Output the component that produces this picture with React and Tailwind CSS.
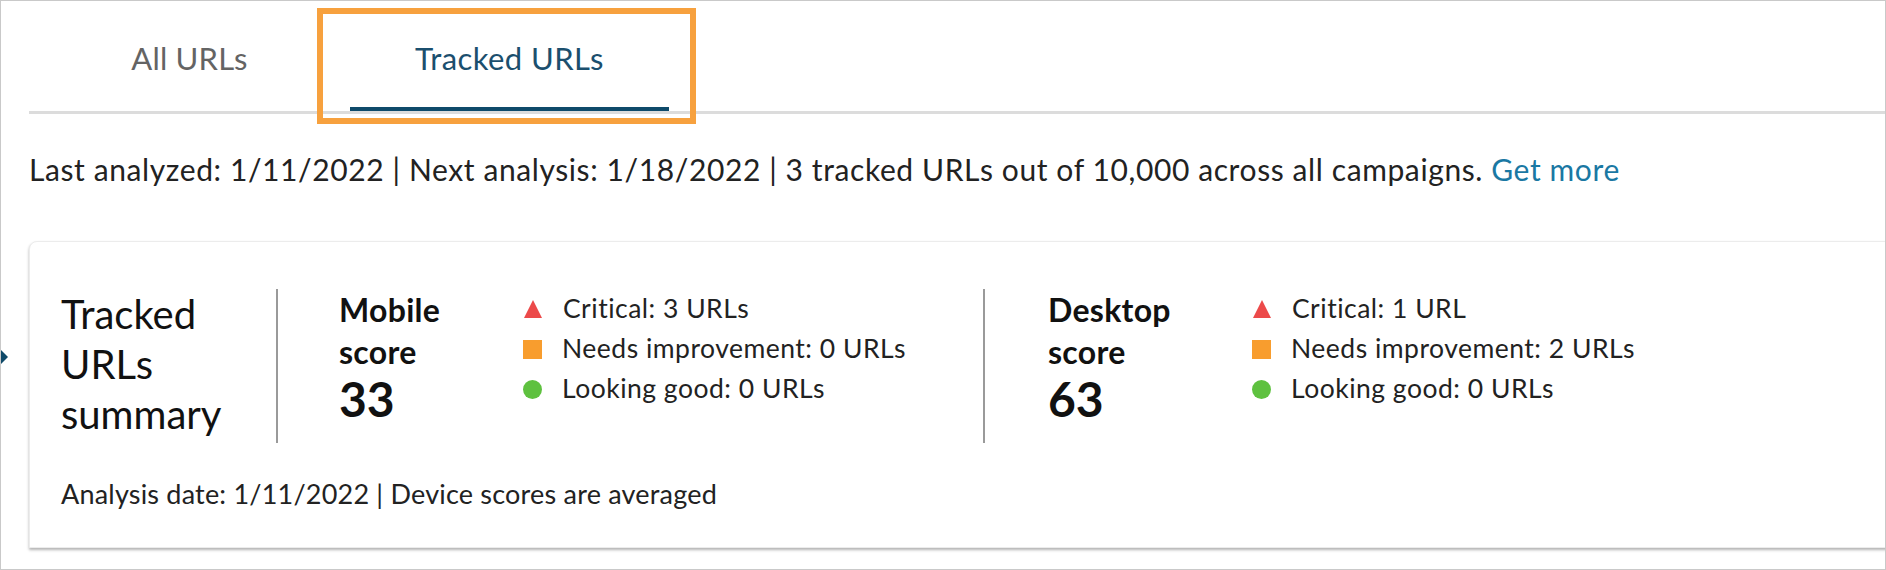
import { useState } from 'react';

const legendMobile = [
  { kind: 'critical', text: 'Critical: 3 URLs' },
  { kind: 'needs', text: 'Needs improvement: 0 URLs' },
  { kind: 'good', text: 'Looking good: 0 URLs' },
];

const legendDesktop = [
  { kind: 'critical', text: 'Critical: 1 URL' },
  { kind: 'needs', text: 'Needs improvement: 2 URLs' },
  { kind: 'good', text: 'Looking good: 0 URLs' },
];

function StatusIcon({ kind }) {
  if (kind === 'critical') {
    return (
      <svg className="w-[20px] h-[20px] shrink-0" viewBox="0 0 20 20">
        <path d="M10 1 L19 19 L1 19 Z" fill="#ec4a4a" />
      </svg>
    );
  }
  if (kind === 'needs') {
    return <span className="w-[19px] h-[19px] shrink-0 bg-[#f89d2e]" />;
  }
  return <span className="w-[19px] h-[19px] shrink-0 rounded-full bg-[#5ec13f]" />;
}

function ScoreBlock({ label, score, legend, labelWidth }) {
  return (
    <div className="flex items-start">
      <div className={`flex flex-col ${labelWidth}`}>
        <span className="text-[32px] leading-[42px] font-bold tracking-[0.3px] text-[#111]">{label}</span>
        <span className="text-[32px] leading-[42px] font-bold tracking-[0.3px] text-[#111]">score</span>
        <span className="text-[48px] leading-[52px] font-bold text-[#111]">{score}</span>
      </div>
      <ul className="flex flex-col">
        {legend.map((item) => (
          <li key={item.text} className="flex items-center gap-[20px] h-[40px]">
            <StatusIcon kind={item.kind} />
            <span className="text-[26.5px] tracking-[0.5px] text-[#222] whitespace-nowrap">{item.text}</span>
          </li>
        ))}
      </ul>
    </div>
  );
}

export default function App() {
  const [tab, setTab] = useState('tracked');

  return (
    <div className="relative w-[1886px] h-[570px] overflow-hidden bg-white border border-[#c9c9c9] font-['Lato',sans-serif]">
      {/* tabs */}
      <div className="ml-[28px] flex border-b-[3px] border-[#dcdcdc]">
        <button onClick={() => setTab('all')}
          className={`w-[321px] h-[110px] pt-[39px] flex flex-col items-center justify-between ${tab === 'all' ? 'text-[#1b4f6e]' : 'text-[#646464]'}`}>
          <span className="text-[31px] leading-[36px] tracking-[0.2px]">All URLs</span>
          <span className={`w-full h-[4px] ${tab === 'all' ? 'bg-[#0e4a6a]' : 'bg-transparent'}`} />
        </button>
        <button onClick={() => setTab('tracked')}
          className={`w-[319px] h-[110px] pt-[39px] flex flex-col items-center justify-between ${tab === 'tracked' ? 'text-[#1b4f6e]' : 'text-[#646464]'}`}>
          <span className="text-[31px] leading-[36px] tracking-[0.4px]">Tracked URLs</span>
          <span className={`w-full h-[4px] ${tab === 'tracked' ? 'bg-[#0e4a6a]' : 'bg-transparent'}`} />
        </button>
      </div>

      {/* highlight annotation */}
      <div className="absolute left-[316px] top-[7px] w-[379px] h-[116px] border-[6px] border-[#f7a13e] pointer-events-none" />

      {/* info line */}
      <p className="ml-[28px] mt-[37px] text-[30px] leading-[36px] tracking-[0.6px] text-[#222] whitespace-nowrap">
        Last analyzed: 1/11/2022 | Next analysis: 1/18/2022 | 3 tracked URLs out of 10,000 across all campaigns.{' '}
        <a href="#" className="text-[#1a78a3]">Get more</a>
      </p>

      {/* left pointer */}
      <span className="absolute left-0 top-[349px] w-0 h-0 border-y-[7px] border-y-transparent border-l-[7px] border-l-[#0f4a69]" />

      {/* summary card */}
      <div className="ml-[28px] mr-[-40px] mt-[54px] rounded-tl-lg border border-[#ececec] bg-white shadow-[0_2px_3px_rgba(0,0,0,0.3)] pt-[47px] pb-[37px] pl-[31px]">
        <div className="flex items-start">
          <h2 className="w-[215px] text-[40px] leading-[50px] text-[#111] font-normal">
            Tracked<br />URLs<br />summary
          </h2>
          <div className="w-[2px] h-[154px] bg-[#9a9a9a]" />
          <div className="w-[705px] pl-[61px]">
            <ScoreBlock label="Mobile" score="33" legend={legendMobile} labelWidth="w-[184px]" />
          </div>
          <div className="w-[2px] h-[154px] bg-[#9a9a9a]" />
          <div className="pl-[63px]">
            <ScoreBlock label="Desktop" score="63" legend={legendDesktop} labelWidth="w-[204px]" />
          </div>
        </div>
        <p className="mt-[35px] text-[27px] leading-[32px] tracking-[0.2px] text-[#222]">
          Analysis date: 1/11/2022 | Device scores are averaged
        </p>
      </div>
    </div>
  );
}
